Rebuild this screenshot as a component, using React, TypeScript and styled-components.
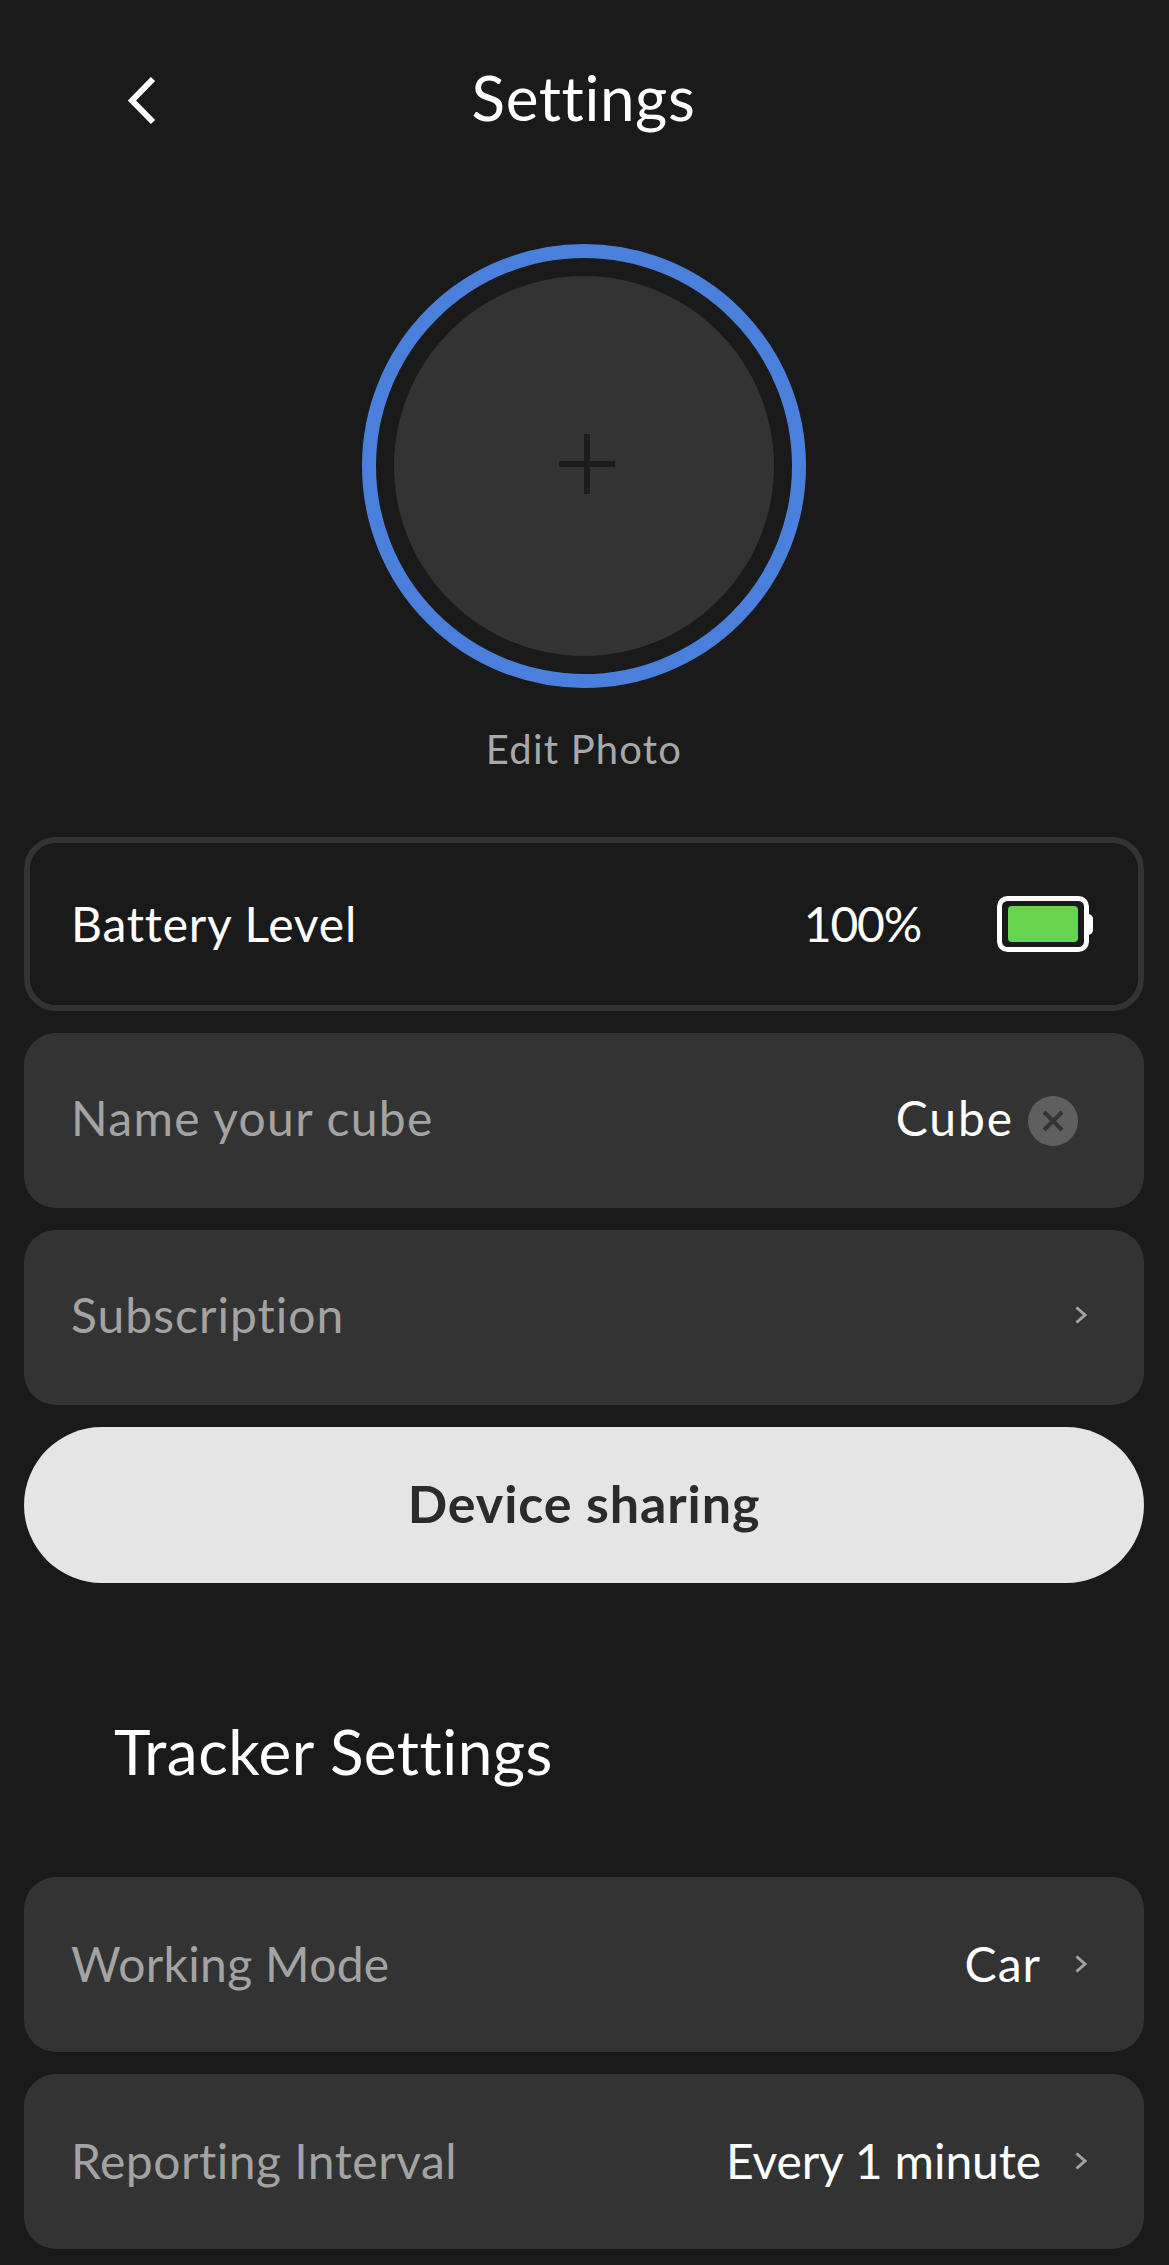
import React from "react";
import styled, { createGlobalStyle } from "styled-components";

const Global = createGlobalStyle`
  html, body { margin: 0; padding: 0; background: #1a1a1a; }
  * { box-sizing: border-box; }
  body { font-family: Lato, "Open Sans", sans-serif; -webkit-font-smoothing: antialiased; }
`;

const Page = styled.div`
  width: 1169px;
  height: 2265px;
  background: #1a1a1a;
  display: flex;
  flex-direction: column;
  padding: 0 25px 0 24px;
  overflow: hidden;
`;

const Header = styled.header`
  height: 200px;
  margin: 0 -25px 0 -24px;
  display: grid;
  grid-template-columns: 1fr auto 1fr;
  align-items: center;
  color: #fff;
`;

const BackIcon = styled.svg`
  width: 33px;
  height: 51px;
  margin-left: 126px;
  justify-self: start;
`;

const Title = styled.h1`
  margin: 0 2px 6px 0;
  font-size: 62px;
  font-weight: 400;
  line-height: 72px;
  letter-spacing: 0.6px;
`;

const PhotoBlock = styled.section`
  margin-top: 44px;
  display: flex;
  flex-direction: column;
  align-items: center;
  gap: 37px;
`;

const Ring = styled.div`
  width: 444px;
  height: 444px;
  border-radius: 50%;
  border: 14px solid #4a80dc;
  display: flex;
  align-items: center;
  justify-content: center;
`;

const Avatar = styled.div`
  width: 380px;
  height: 380px;
  border-radius: 50%;
  background: #333333;
  display: flex;
  align-items: center;
  justify-content: center;
`;

const PlusIcon = styled.svg`
  width: 56px;
  height: 60px;
  margin: 0 0 4px 5px;
`;

const EditLabel = styled.div`
  font-size: 40px;
  line-height: 48px;
  color: #a8a8a8;
  letter-spacing: 1.2px;
`;

const List = styled.div<{ $top: number }>`
  margin-top: ${(p) => p.$top}px;
  display: flex;
  flex-direction: column;
  gap: 22px;
`;

const Card = styled.div<{ $outlined?: boolean; $shift?: boolean }>`
  height: ${(p) => (p.$outlined ? "174px" : "175px")};
  border-radius: 32px;
  display: flex;
  align-items: center;
  justify-content: space-between;
  font-size: 48px;
  padding-top: ${(p) => (p.$shift ? "4px" : "0")};
  padding-left: ${(p) => (p.$outlined ? "41px" : "47px")};
  padding-right: ${(p) => (p.$outlined ? "44px" : "57px")};
  background: ${(p) => (p.$outlined ? "transparent" : "#333333")};
  border: ${(p) => (p.$outlined ? "6px solid #333333" : "none")};
`;

const Label = styled.span<{ $bright?: boolean; $ls: number }>`
  color: ${(p) => (p.$bright ? "#ffffff" : "#a3a3a3")};
  letter-spacing: ${(p) => p.$ls}px;
  padding-bottom: 6px;
`;

const Value = styled.span<{ $ls: number }>`
  color: #ffffff;
  letter-spacing: ${(p) => p.$ls}px;
  padding-bottom: 6px;
`;

const Right = styled.div`
  display: flex;
  align-items: center;
`;

const Percent = styled(Value)`
  margin-right: 76px;
`;

const BatteryIcon = styled.svg`
  width: 97px;
  height: 56px;
  margin-bottom: 4px;
`;

const ClearButton = styled.span`
  width: 50px;
  height: 50px;
  margin-left: 14px;
  margin-right: 9px;
  border-radius: 50%;
  background: #5f5f5f;
  display: flex;
  align-items: center;
  justify-content: center;
`;

const ChevronIcon = styled.svg`
  width: 12px;
  height: 18px;
  margin-left: 34px;
  margin-bottom: 6px;
`;

const ShareButton = styled.button`
  height: 156px;
  border: none;
  border-radius: 78px;
  background: #e5e5e5;
  color: #2b2b2b;
  font-family: inherit;
  font-size: 52px;
  font-weight: 700;
  letter-spacing: 0.9px;
  padding: 0 0 4px;
`;

const SectionTitle = styled.h2`
  margin: 0;
  height: 294px;
  padding: 41px 0 0 90px;
  display: flex;
  align-items: center;
  font-size: 62px;
  font-weight: 400;
  color: #fff;
  letter-spacing: 0.5px;
`;

const Chevron = () => (
  <ChevronIcon viewBox="0 0 12 18" fill="none" stroke="#a3a3a3" strokeWidth="3">
    <path d="M1.5 1.5 L10 9 L1.5 16.5" />
  </ChevronIcon>
);

const Battery = () => (
  <BatteryIcon viewBox="0 0 97 56">
    <path d="M90 18h1a5 5 0 0 1 5 5v11a5 5 0 0 1-5 5h-1z" fill="#fff" />
    <rect x="2.5" y="2.5" width="87" height="51" rx="8" fill="none" stroke="#fff" strokeWidth="5" />
    <rect x="11" y="10" width="70" height="36" rx="4" fill="#67d44f" />
  </BatteryIcon>
);

export default function App() {
  return (
    <Page>
      <Global />
      <Header>
        <BackIcon viewBox="0 0 33 51" fill="none" stroke="#fff" strokeWidth="6">
          <path d="M27 4 L6 25.5 L27 47" />
        </BackIcon>
        <Title>Settings</Title>
      </Header>
      <PhotoBlock>
        <Ring>
          <Avatar>
            <PlusIcon viewBox="0 0 56 60" fill="none" stroke="#1c1c1c" strokeWidth="6">
              <path d="M0 30 H56 M28 0 V60" />
            </PlusIcon>
          </Avatar>
        </Ring>
        <EditLabel>Edit Photo</EditLabel>
      </PhotoBlock>
      <List $top={64}>
        <Card $outlined $shift>
          <Label $bright $ls={0.8}>Battery Level</Label>
          <Right>
            <Percent $ls={-1.2}>100%</Percent>
            <Battery />
          </Right>
        </Card>
        <Card>
          <Label $ls={1.3}>Name your cube</Label>
          <Right>
            <Value $ls={1.9}>Cube</Value>
            <ClearButton>
              <svg width="22" height="22" viewBox="0 0 22 22" fill="none" stroke="#333" strokeWidth="4">
                <path d="M2 2 L20 20 M20 2 L2 20" />
              </svg>
            </ClearButton>
          </Right>
        </Card>
        <Card>
          <Label $ls={1}>Subscription</Label>
          <Right>
            <Chevron />
          </Right>
        </Card>
        <ShareButton>Device sharing</ShareButton>
      </List>
      <SectionTitle>Tracker Settings</SectionTitle>
      <List $top={0}>
        <Card $shift>
          <Label $ls={0.3}>Working Mode</Label>
          <Right>
            <Value $ls={1}>Car</Value>
            <Chevron />
          </Right>
        </Card>
        <Card $shift>
          <Label $ls={0.5}>Reporting Interval</Label>
          <Right>
            <Value $ls={-0.1}>Every 1 minute</Value>
            <Chevron />
          </Right>
        </Card>
      </List>
    </Page>
  );
}
